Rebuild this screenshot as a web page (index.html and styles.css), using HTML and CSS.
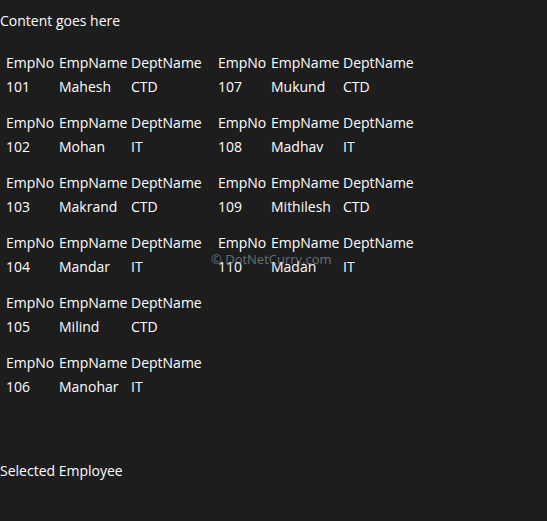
FILE: index.html
```html
<!DOCTYPE html>
<html>
<head>
<meta charset="utf-8">
<link rel="stylesheet" href="styles.css">
</head>
<body>
<div class="page">
  <div class="title">Content goes here</div>
  <div class="emp-grid">
    <div class="emp"><span>EmpNo</span><span>EmpName</span><span>DeptName</span><span>101</span><span>Mahesh</span><span>CTD</span></div>
    <div class="emp"><span>EmpNo</span><span>EmpName</span><span>DeptName</span><span>102</span><span>Mohan</span><span>IT</span></div>
    <div class="emp"><span>EmpNo</span><span>EmpName</span><span>DeptName</span><span>103</span><span>Makrand</span><span>CTD</span></div>
    <div class="emp"><span>EmpNo</span><span>EmpName</span><span>DeptName</span><span>104</span><span>Mandar</span><span>IT</span></div>
    <div class="emp"><span>EmpNo</span><span>EmpName</span><span>DeptName</span><span>105</span><span>Milind</span><span>CTD</span></div>
    <div class="emp"><span>EmpNo</span><span>EmpName</span><span>DeptName</span><span>106</span><span>Manohar</span><span>IT</span></div>
    <div class="emp"><span>EmpNo</span><span>EmpName</span><span>DeptName</span><span>107</span><span>Mukund</span><span>CTD</span></div>
    <div class="emp"><span>EmpNo</span><span>EmpName</span><span>DeptName</span><span>108</span><span>Madhav</span><span>IT</span></div>
    <div class="emp"><span>EmpNo</span><span>EmpName</span><span>DeptName</span><span>109</span><span>Mithilesh</span><span>CTD</span></div>
    <div class="emp"><span>EmpNo</span><span>EmpName</span><span>DeptName</span><span>110</span><span>Madan</span><span>IT</span></div>
  </div>
  <div class="selected">Selected Employee</div>
  <div class="watermark">© DotNetCurry.com</div>
</div>
</body>
</html>
```
FILE: styles.css
```css
html, body {
  margin: 0;
  padding: 0;
  background: #1d1d1d;
}
body {
  color: #ffffff;
  font-family: "Open Sans", "Noto Sans", sans-serif;
  font-size: 14px;
}
.page {
  position: relative;
  width: 547px;
  height: 521px;
}
.title {
  padding-top: 11px;
  line-height: 20px;
}
.emp-grid {
  margin-top: 20px;
  padding-left: 6px;
  display: grid;
  grid-auto-flow: column;
  grid-template-rows: repeat(6, 60px);
  grid-auto-columns: 212px;
}
.emp {
  display: grid;
  grid-template-columns: 53px 72px auto;
  grid-auto-rows: 24px;
  line-height: 23px;
}
.selected {
  margin-top: 50px;
  line-height: 20px;
}
.watermark {
  position: absolute;
  left: 211px;
  top: 251px;
  font-size: 13px;
  line-height: 16px;
  color: rgba(150, 170, 195, 0.6);
}
```
